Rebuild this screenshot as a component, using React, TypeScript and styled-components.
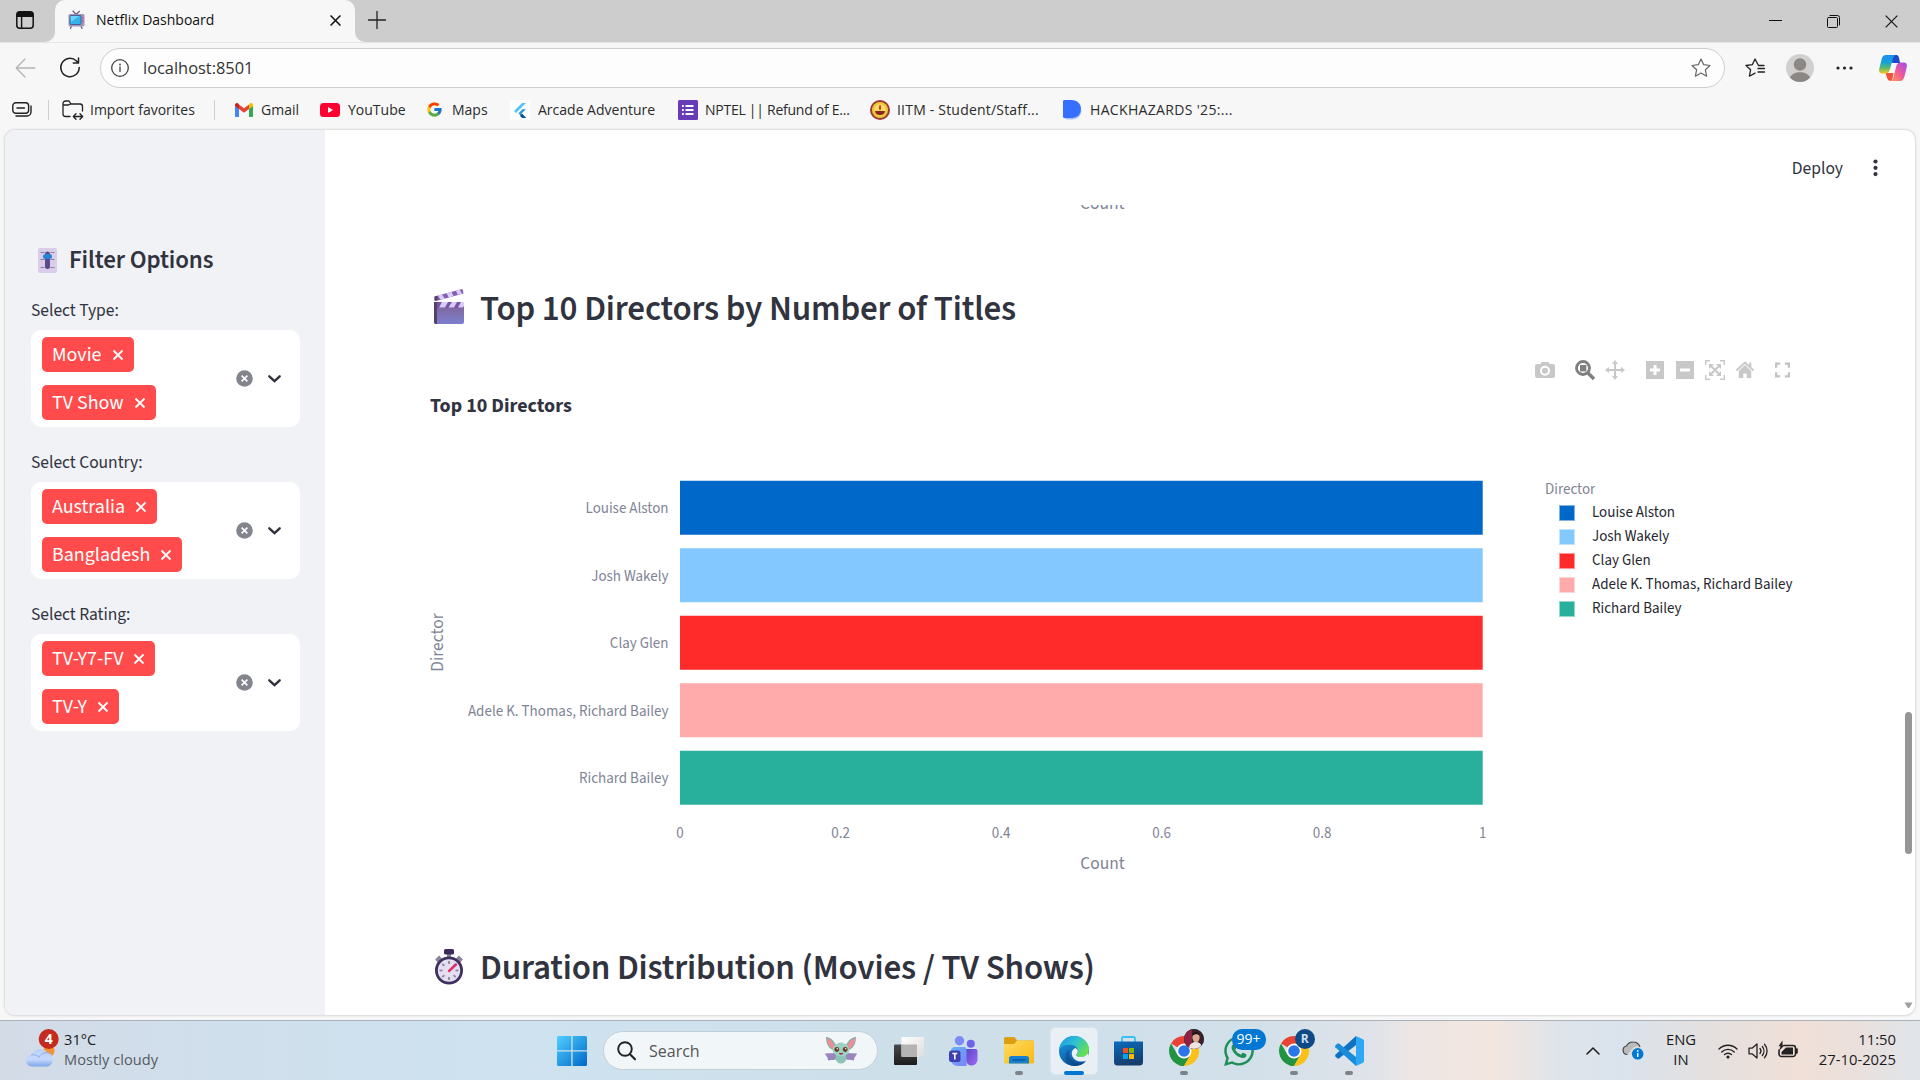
import React from 'react';
import styled, { createGlobalStyle } from 'styled-components';
import { FcGoogle } from 'react-icons/fc';
import { FaWhatsapp } from 'react-icons/fa';

const SOURCE = '"Source Sans 3", "Source Sans Pro", "Noto Sans CJK JP", sans-serif';
const SEGOE = '"Segoe UI", "Open Sans", "Noto Sans", sans-serif';

const GlobalStyle = createGlobalStyle`
  * { box-sizing: border-box; }
  body { margin: 0; background: #f7f7f7; font-family: ${SEGOE}; overflow: hidden; }
  svg { display: block; flex: none; overflow: visible; }
`;

const Screen = styled.div`
  width: 1920px;
  height: 1080px;
  display: flex;
  flex-direction: column;
  background: #f7f7f7;
  overflow: hidden;
`;

/* ---------- Browser tab strip ---------- */
const TabStrip = styled.div`
  height: 42px;
  flex: none;
  display: flex;
  background: linear-gradient(#cdcdcd 50%, #f7f7f7 50%);
`;
const StripStart = styled.div`
  width: 55px;
  padding: 11px 0 0 16px;
  background: #cdcdcd;
  border-bottom-right-radius: 10px;
`;
const Tab = styled.div`
  width: 300px;
  display: flex;
  align-items: center;
  padding: 0 14px 2px 13px;
  background: #f7f7f7;
  border-radius: 10px 10px 0 0;
`;
const TabTitle = styled.span`
  flex: 1;
  margin-left: 11px;
  font-size: 14px;
  line-height: 20px;
  color: #111;
`;
const StripRest = styled.div`
  flex: 1;
  display: flex;
  justify-content: space-between;
  align-items: flex-start;
  padding: 11px 22px 0 13px;
  background: #cdcdcd;
  border-bottom-left-radius: 10px;
`;
const WindowButtons = styled.div`
  display: flex;
  gap: 45px;
  padding-top: 4px;
`;

/* ---------- Address row ---------- */
const AddressRow = styled.div`
  height: 51px;
  flex: none;
  display: flex;
  align-items: center;
  border-top: 1px solid #e6e6e6;
  padding: 0 13px 1px 15px;
`;
const BackSlot = styled.div`width: 45px;`;
const ReloadSlot = styled.div`width: 40px;`;
const AddressField = styled.div`
  width: 1625px;
  height: 40px;
  display: flex;
  align-items: center;
  padding: 0 13px 0 10px;
  background: #fdfdfd;
  border: 1px solid #cfcfcf;
  border-radius: 20px;
`;
const Url = styled.span`
  flex: 1;
  margin-left: 14px;
  padding-bottom: 1px;
  font-size: 16.4px;
  color: #333;
`;
const BrowserTools = styled.div`
  flex: 1;
  display: flex;
  align-items: center;
  padding-left: 20px;
`;
const ToolSlot = styled.div<{ $w: number }>`width: ${p => p.$w}px;`;

/* ---------- Favourites row ---------- */
const FavoritesRow = styled.div`
  height: 36px;
  flex: none;
  display: flex;
  align-items: center;
  padding-bottom: 3px;
  font-size: 14px;
  color: #2b2b2b;
`;
const Favorite = styled.div<{ $w: number; $gap: number; $spacing?: number }>`
  width: ${p => p.$w}px;
  display: flex;
  align-items: center;
  gap: ${p => p.$gap}px;
  letter-spacing: ${p => p.$spacing ?? 0}px;
  white-space: nowrap;
`;
const FavoriteLabel = styled.span`padding-bottom: 1px;`;
const Divider = styled.div<{ $after: number }>`
  width: 1px;
  height: 20px;
  margin-right: ${p => p.$after}px;
  background: #cfcfcf;
`;
const CollectionsSlot = styled.div`width: 48px; padding-left: 12px;`;

/* ---------- Page frame ---------- */
const PageFrame = styled.div`
  height: 885px;
  flex: none;
  display: flex;
  margin: 1px 5px 0;
  border-radius: 10px;
  background: #fff;
  box-shadow: 0 0 2px 1px rgba(0, 0, 0, 0.12);
  overflow: hidden;
`;
const Sidebar = styled.aside`
  width: 320px;
  flex: none;
  padding: 112px 25px 0 26px;
  background: #f0f2f6;
  color: #31333f;
  font-family: ${SOURCE};
`;
const SidebarTitle = styled.h2`
  display: flex;
  align-items: center;
  gap: 12px;
  height: 36px;
  margin: 0 0 18px;
  padding-left: 7px;
  font-size: 25px;
  font-weight: 600;
  letter-spacing: -0.13px;
`;
const FilterGroup = styled.div`
  display: flex;
  flex-direction: column;
  height: 152px;
`;
const FilterLabel = styled.label`
  height: 34px;
  line-height: 29px;
  font-size: 17.5px;
  letter-spacing: -0.03px;
`;
const MultiSelect = styled.div`
  width: 269px;
  height: 97px;
  display: flex;
  align-items: center;
  padding: 0 19px 0 11px;
  background: #fff;
  border-radius: 10px;
`;
const TagList = styled.div`
  flex: 1;
  display: flex;
  flex-direction: column;
  align-items: flex-start;
  gap: 13px;
`;
const Tag = styled.span`
  height: 35px;
  display: flex;
  align-items: center;
  gap: 11px;
  padding: 1px 11px 0 10px;
  border-radius: 5px;
  background: #ff4b4b;
  color: #fff;
  font-size: 20px;
  line-height: 35px;
`;
const SelectActions = styled.div`
  display: flex;
  align-items: center;
  gap: 15px;
`;

const Main = styled.main`
  flex: 1;
  display: flex;
  flex-direction: column;
  font-family: ${SOURCE};
  color: #31333f;
`;
const Toolbar = styled.header`
  height: 75px;
  flex: none;
  display: flex;
  justify-content: flex-end;
  align-items: center;
  gap: 30px;
  padding: 1px 37px 0 0;
  font-size: 17.5px;
`;
const ScrollArea = styled.div`
  flex: 1;
  display: flex;
  overflow: hidden;
`;
const Content = styled.div`
  flex: 1;
  padding-left: 105px;
`;
const ClippedAxisTitle = styled.div`
  height: 70px;
  padding-left: 650px;
  overflow: hidden;
  font-size: 17.5px;
  line-height: 20px;
  color: #808495;

  span { display: block; margin-top: -11px; }
`;
const SectionTitle = styled.h3`
  display: flex;
  align-items: center;
  gap: 16px;
  height: 66px;
  margin: 0;
  padding-left: 4px;
  font-size: 35px;
  font-weight: 600;
  letter-spacing: -0.19px;
  line-height: 42px;

  span { padding-top: 2px; }
`;
const Chart = styled.figure`
  height: 593px;
  margin: 0;
  display: flex;
  flex-direction: column;
`;
const ModeBar = styled.div`
  display: flex;
  align-items: center;
  height: 58px;
  padding-left: 1105px;
`;
const ModeButton = styled.div<{ $gap: number }>`
  width: 20px;
  margin-right: ${p => p.$gap}px;
`;
const ChartTitle = styled.figcaption`
  height: 61px;
  line-height: 14px;
  font-size: 20px;
  font-weight: 700;
`;
const ChartBody = styled.div`
  display: flex;
`;
const Legend = styled.div`
  padding-top: 19px;
  font-size: 15px;
  line-height: 24px;
  color: #262730;
`;
const LegendTitle = styled.div`
  height: 22px;
  line-height: 22px;
  color: #808495;
`;
const LegendItem = styled.div`
  display: flex;
  align-items: center;
  height: 24px;
  padding-left: 14px;
  gap: 17px;
  white-space: nowrap;
`;
const Swatch = styled.i<{ $color: string }>`
  width: 16px;
  height: 16px;
  margin-top: -1px;
  background: ${p => p.$color};
  border: 0.5px solid rgba(255, 255, 255, 0.5);
`;
const ScrollTrack = styled.div`
  width: 13px;
  display: flex;
  flex-direction: column;
  align-items: center;
  justify-content: space-between;
  padding: 507px 1px 6px 0;
`;
const ScrollThumb = styled.div`
  width: 7px;
  height: 142px;
  border-radius: 4px;
  background: #969696;
`;

/* ---------- Taskbar ---------- */
const Taskbar = styled.footer`
  height: 60px;
  margin-top: auto;
  flex: none;
  display: flex;
  align-items: center;
  border-top: 1px solid #a9b2ba;
  background: linear-gradient(90deg, #d3dbe7 0, #d0dfec 220px, #cee2f0 500px, #cddfe9 900px,
    #d2e0ea 1250px, #e0e3e9 1375px, #ece6e5 1410px, #f3e6df 1490px, #dfe4ea 1560px, #dae3ed 1620px,
    #e3e0e0 1700px, #f0e0d8 1800px, #ebe0db 1850px, #dfe5ea 1920px);
  color: #1b1b1b;
`;
const Weather = styled.div`
  width: 557px;
  display: flex;
  align-items: center;
  padding-left: 25px;
  gap: 5px;
`;
const WeatherText = styled.div`
  font-size: 14.6px;
  line-height: 20px;
  padding-bottom: 4px;
  letter-spacing: 0.05px;
`;
const Muted = styled.div`color: #555b62;`;
const SearchPill = styled.div`
  width: 275px;
  height: 39px;
  margin: 0 3px 0 16px;
  display: flex;
  align-items: center;
  padding: 0 20px 0 13px;
  border: 1px solid #c3d0d8;
  border-radius: 20px;
  background: #f1f6f9;
`;
const SearchText = styled.span`
  flex: 1;
  margin-left: 13px;
  font-size: 16px;
  color: #555;
`;
const AppSlot = styled.div`
  position: relative;
  width: 55.1px;
  height: 48px;
  display: flex;
  align-items: center;
  justify-content: center;
`;
const ActiveTile = styled.div`
  width: 48px;
  height: 48px;
  display: flex;
  align-items: center;
  justify-content: center;
  border-radius: 5px;
  border: 1px solid #dbe5ec;
  background: #e8f0f6;
`;
const Indicator = styled.i<{ $active?: boolean }>`
  position: absolute;
  bottom: 0;
  left: 50%;
  width: ${p => (p.$active ? 20 : 8)}px;
  height: 4px;
  margin-left: ${p => (p.$active ? -10 : -4)}px;
  border-radius: 2px;
  background: ${p => (p.$active ? '#0078d4' : '#7c8388')};
`;
const CountBadge = styled.span`
  position: absolute;
  top: 2px;
  left: 20px;
  width: 34px;
  height: 21px;
  border-radius: 10px;
  background: #0078d4;
  color: #fff;
  font-size: 14px;
  line-height: 20px;
  text-align: center;
`;
const ProfileBadge = styled.span`
  position: absolute;
  top: 2px;
  left: 28px;
  width: 20px;
  height: 20px;
  border-radius: 50%;
  overflow: hidden;
  background: #0e4a86;
  color: #cfe0f2;
  font-size: 12px;
  font-weight: 700;
  line-height: 20px;
  text-align: center;
`;
const Tray = styled.div`
  flex: 1;
  display: flex;
  align-items: center;
  justify-content: flex-end;
  padding-right: 24px;
`;
const TraySlot = styled.div<{ $after: number }>`margin-right: ${p => p.$after}px;`;
const TrayText = styled.div<{ $align: string; $w: number }>`
  width: ${p => p.$w}px;
  padding-bottom: 3px;
  text-align: ${p => p.$align};
  font-size: 14.8px;
  line-height: 20px;
  white-space: nowrap;
`;

/* ---------- Icons ---------- */
const line = (width = 1.4, color = '#222') => ({
  fill: 'none', stroke: color, strokeWidth: width, strokeLinecap: 'round' as const, strokeLinejoin: 'round' as const,
});

const TabActionsIcon = () => (
  <svg width="18" height="18" viewBox="0 0 18 18">
    <rect x="0.8" y="0.8" width="16.4" height="16.4" rx="3" {...line(1.5, '#111')} />
    <path d="M.8 6V4a3 3 0 0 1 3-3.2h10.4a3 3 0 0 1 3 3.2v2z" fill="#111" />
    <path d="M5.6 5v12" {...line(1.4, '#111')} />
  </svg>
);
const TvIcon = () => (
  <svg width="17" height="18" viewBox="0 0 17 18">
    <path d="m5 0 3 3.5L11.500.3M3.500 15 2.500 17.500M13 15l1 2.500" {...line(1.2, '#6b5a78')} />
    <rect x="0.500" y="3" width="16" height="12.500" rx="1.500" fill="#a695b5" />
    <rect x="2" y="4.500" width="11" height="9" rx="1" fill="#32b3ee" stroke="#37538a" strokeWidth=".8" />
    <path d="M2.500 5h9L3 11z" fill="#6bd2fa" />
    <circle cx="14.900" cy="7" r=".8" fill="#e0386a" /><circle cx="14.900" cy="10" r=".7" fill="#6b5a78" />
  </svg>
);
const CrossIcon = ({ size = 10, w = 1.4, color = '#111' }: { size?: number; w?: number; color?: string }) => (
  <svg width={size} height={size} viewBox="0 0 10 10"><path d="m.5.5 9 9m0-9-9 9" {...line(w, color)} strokeLinecap="butt" /></svg>
);
const PlusIcon = () => <svg width="18" height="18" viewBox="0 0 18 18"><path d="M9 .5v17M.5 9h17" {...line(1.3)} /></svg>;
const MinimizeIcon = () => <svg width="13" height="13" viewBox="0 0 13 13"><path d="M0 5.500h13" stroke="#111" /></svg>;
const RestoreIcon = () => (
  <svg width="13" height="13" viewBox="0 0 13 13">
    <rect x=".5" y="2.500" width="10" height="10" rx="1" {...line(1, '#111')} />
    <path d="M3 .5h7.500a2 2 0 0 1 2 2V10" {...line(1, '#111')} />
  </svg>
);
const BackIcon = () => <svg width="21" height="20" viewBox="0 0 21 20"><path d="M20 10H1.500M10 1 1.200 10l8.800 9" {...line(1.3, '#b4b4b4')} /></svg>;
const ReloadIcon = () => (
  <svg width="21" height="21" viewBox="0 0 21 21"><path d="M19.200 10.500a9.200 9.200 0 1 1-3-6.800l2 2M18.500 1v5h-5.200" {...line(1.5)} /></svg>
);
const InfoIcon = () => (
  <svg width="18" height="18" viewBox="0 0 18 18">
    <circle cx="9" cy="9" r="8.300" {...line(1.3, '#444')} /><path d="M9 8v4.500" {...line(1.3, '#444')} /><circle cx="9" cy="5.500" r=".9" fill="#444" />
  </svg>
);
const StarIcon = () => (
  <svg width="20" height="20" viewBox="0 0 20 20">
    <path d="m10 1 2.700 5.700 6.300.8-4.600 4.300 1.200 6.400L10 15.100l-5.600 3.100 1.200-6.400L1 7.500l6.300-.8z" {...line(1.2, '#666')} />
  </svg>
);
const FavoritesIcon = () => (
  <svg width="20" height="20" viewBox="0 0 20 20">
    <path d="M19 7.500h-5.500L10 1 7.300 6.700 1 7.500l4.600 4.300-1.200 6.400L10 15.100M13 10.500h6.500M13 14h6.500" {...line(1.3)} />
  </svg>
);
const AvatarIcon = () => (
  <svg width="28" height="28" viewBox="0 0 28 28">
    <circle cx="14" cy="14" r="14" fill="#d2d0ce" /><circle cx="14" cy="10.500" r="6.200" fill="#8a8785" />
    <path d="M4 23.800C5.500 20 9 18.200 14 18.200s8.500 1.800 10 5.600A14 14 0 0 1 4 23.800z" fill="#8a8785" />
  </svg>
);
const DotsIcon = ({ vertical }: { vertical?: boolean }) => vertical ? (
  <svg width="5" height="18" viewBox="0 0 5 18">{[2.5, 8.8, 15.1].map(y => <circle key={y} cx="2.500" cy={y} r="2.100" fill="#31333f" />)}</svg>
) : (
  <svg width="17" height="4" viewBox="0 0 17 4">{[2, 8.5, 15].map(x => <circle key={x} cx={x} cy="2" r="1.600" fill="#222" />)}</svg>
);
const CopilotIcon = () => (
  <svg width="28" height="26" viewBox="0 0 28 26">
    <defs>
      <linearGradient id="cpA" x1="0" y1="0" x2="0" y2="1"><stop offset="0" stopColor="#1f8df0" /><stop offset=".4" stopColor="#17a0d6" /><stop offset=".7" stopColor="#58bb6b" /><stop offset="1" stopColor="#f8c81c" /></linearGradient>
      <linearGradient id="cpB" x1="1" y1="0" x2="0" y2="1"><stop offset="0" stopColor="#9a4df0" /><stop offset=".5" stopColor="#f0599b" /><stop offset="1" stopColor="#ff9a4d" /></linearGradient>
    </defs>
    <path d="M12 0h5.500c1.200 0 2 1 2.300 2.200L21.200 8h-8z" fill="#1b49cf" />
    <path d="M6.500 18h8l-1.500 7.800h-2c-1.600 0-2.300-1-2.700-2.200z" fill="#f0523a" />
    <path d="M7 0h9.500c-1.500.6-2 2-2.500 3.600L10.800 14.500c-.7 2.700-1.800 4-4.500 4H3.200C.6 18.500-.4 16.600.2 14L2.700 4C3.400 1.500 4.800 0 7 0z" fill="url(#cpA)" />
    <path d="M21 26h-9.500c1.800-.7 2.300-2 2.800-3.600L17.200 11.500c.7-2.700 2-4 4.500-4h3.100c2.600 0 3.600 2 3 4.500L25.300 22c-.7 2.500-2.100 4-4.300 4z" fill="url(#cpB)" />
  </svg>
);
const CollectionsIcon = () => (
  <svg width="20" height="15" viewBox="0 0 20 15">
    <rect x=".8" y=".8" width="15.800" height="10.500" rx="3" {...line(1.4)} /><path d="M5 6h7.500M4 14h11a4 4 0 0 0 4-4V4" {...line(1.4)} />
  </svg>
);
const FolderIcon = () => (
  <svg width="22" height="20" viewBox="0 0 22 20">
    <path d="M8 16.500H3.500A2.500 2.500 0 0 1 1 14V3.500A2.500 2.500 0 0 1 3.500 1H7l2 3h9a2.500 2.500 0 0 1 2.500 2.500V11M1 5h5.500L9 3.600M11.500 16.500h9M14 13.800l-2.700 2.700 2.700 2.700m4-5.400 2.700 2.700L18 19.200" {...line(1.3)} />
  </svg>
);
const GmailIcon = () => (
  <svg width="18" height="14" viewBox="0 0 18 14">
    <path d="M0 3v9.700C0 13.400.5 14 1.300 14H4V5z" fill="#4285f4" /><path d="M14 5v9h2.700c.8 0 1.300-.6 1.300-1.300V3z" fill="#34a853" />
    <path d="M14 1.500V6l4-3V2c0-1.800-2-2.600-3.200-1.600z" fill="#fbbc04" /><path d="M4 6V1.500l5 3.800 5-3.800V6L9 9.800z" fill="#ea4335" />
    <path d="M0 2v1l4 3V1.500L3.200.4C2-.6 0 .2 0 2z" fill="#c5221f" />
  </svg>
);
const YoutubeIcon = () => (
  <svg width="20" height="14" viewBox="0 0 20 14"><rect width="20" height="14" rx="3.500" fill="#f03" /><path d="m8 4 5 3-5 3z" fill="#fff" /></svg>
);
const FlutterIcon = () => (
  <svg width="20" height="20" viewBox="0 0 20 20">
    <path d="M0 0h20v20H0z" fill="#fff" /><path d="M4 11 12 3h4l-10 10z" fill="#54c5f8" /><path d="m8.500 13.300 4-4H16l-4.500 4.200L16 18h-3.500z" fill="#2196dc" /><path d="m10 16 2.300-2.300L16 18h-3.800z" fill="#0b4f96" />
  </svg>
);
const FormIcon = () => (
  <svg width="20" height="20" viewBox="0 0 20 20">
    <rect width="20" height="20" rx="1.500" fill="#673ab7" /><path d="M4 6h1.800M4 10h1.800M4 14h1.800M7.500 6h8M7.500 10h8M7.500 14h8" stroke="#fff" strokeWidth="1.900" />
  </svg>
);
const CrestIcon = () => (
  <svg width="20" height="20" viewBox="0 0 20 20">
    <circle cx="10" cy="10" r="10" fill="#9c3a38" /><circle cx="10" cy="10" r="8" fill="#edca36" /><circle cx="10" cy="9.500" r="5.500" fill="#f5de6a" />
    <path d="M5 11h10c-.5 3-2.500 4-5 4s-4.500-1-5-4z" fill="#8c2320" /><path d="M10 4.500c1.500 2 1.500 4.500 0 6-1.500-1.500-1.500-4 0-6z" fill="#d3352b" />
  </svg>
);
const DevfolioIcon = () => (
  <svg width="19" height="20" viewBox="0 0 19 20">
    <path d="M1.500 12v5c0 1.500 1 2.500 2.500 2.500h5c6 0 9-4 9.500-9z" fill="#a9c6ff" /><path d="M1.500 0h7C14.500 0 18 4 18 9s-3.500 9-9.500 9h-7C.6 18 0 17.300 0 16.500v-15C0 .7.6 0 1.500 0z" fill="#3770ff" />
  </svg>
);

const SliderIcon = () => (
  <svg width="19" height="25" viewBox="0 0 19 25">
    <rect width="19" height="25" rx="2" fill="#d9cdea" /><path d="M2.500 4.500h4M12.500 4.500h4M2.500 11.500h4M12.500 11.500h4M2.500 19.500h4M12.500 19.500h4" stroke="#8c8098" strokeWidth="1.100" />
    <rect x="7" y="3.500" width="5" height="17.500" rx="2.500" fill="#5b4a8c" /><rect x="5" y="6" width="9" height="5" rx="2.500" fill="#2784d4" />
  </svg>
);
const ClearIcon = () => (
  <svg width="17" height="17" viewBox="0 0 17 17"><circle cx="8.500" cy="8.500" r="8.300" fill="#83858c" /><path d="m5.600 5.600 5.800 5.800m0-5.800-5.800 5.800" stroke="#fff" strokeWidth="1.700" /></svg>
);
const ChevronIcon = () => <svg width="13" height="8" viewBox="0 0 13 8"><path d="m1.300 1.300 5.200 4.900 5.200-4.900" {...line(2.4, '#31333f')} strokeLinejoin="miter" /></svg>;

const ClapperIcon = () => (
  <svg width="30" height="36" viewBox="0 1 30 36">
    <defs>
      <linearGradient id="clap" x1="0" y1="0" x2="0" y2="1"><stop offset="0" stopColor="#7f6090" /><stop offset="1" stopColor="#7d80cf" /></linearGradient>
      <clipPath id="armClip"><path d="M.5 7.500 27 .3c1-.3 1.800.2 2 1.200l.5 3L3 11.800H.8z" /></clipPath>
      <clipPath id="slateClip"><path d="M0 13h30v6H0z" /></clipPath>
    </defs>
    <g clipPath="url(#armClip)"><path d="M0 0h30v13H0z" fill="#8560b0" /><path d="m3 5 4-1 4 6-4 1.500zM12 3l5-1 3 6-5 1zM21 0l4-1 3 6-4 1z" fill="#d9cdfb" /></g>
    <path d="M0 13h30v20a2 2 0 0 1-2 2H2a2 2 0 0 1-2-2z" fill="url(#clap)" />
    <path d="M0 13h3v22H2a2 2 0 0 1-2-2z" fill="#54406a" />
    <g clipPath="url(#slateClip)"><path d="M3 13h27v6H3z" fill="#7b52a8" /><path d="m8 13h6l-3 5.500H5zM18 13h5l-3 5.500h-5.500zM27 13h3v4l-1 1.500h-5z" fill="#d6cdfb" /></g>
    <path d="M.5 7.500v4.300l3-.8v-4.300z" fill="#54406a" />
  </svg>
);
const StopwatchIcon = () => (
  <svg width="30" height="36" viewBox="0 0 30 36">
    <rect x="13" y="4" width="4" height="5" fill="#8a8496" /><rect x="10" y="0" width="10" height="5.500" rx="1.500" fill="#3d2a5a" />
    <path d="m2.500 12 4-4M27.500 12l-4-4" stroke="#8a8496" strokeWidth="4" />
    <circle cx="15" cy="21.500" r="12.600" fill="#e4dff0" stroke="#40305f" strokeWidth="2.800" />
    <g stroke="#8c86a0" strokeWidth="1.800">
      {[0, 45, 90, 135, 180, 225, 270, 315].map(a => <path key={a} d="M15 12v3" transform={`rotate(${a} 15 21.500)`} />)}
    </g>
    <path d="m15 22 7-6.500" stroke="#e0306a" strokeWidth="2.400" strokeLinecap="round" />
  </svg>
);

const GREY = '#c8c8c8';
const CameraIcon = () => (
  <svg width="20" height="20" viewBox="0 0 20 20">
    <path fillRule="evenodd" d="M6.500 2h7l1 2H18a2 2 0 0 1 2 2v10a2 2 0 0 1-2 2H2a2 2 0 0 1-2-2V6a2 2 0 0 1 2-2h3.500zM10 5.700a5 5 0 1 0 0 10 5 5 0 0 0 0-10z" fill={GREY} /><circle cx="10" cy="10.800" r="3" fill={GREY} />
  </svg>
);
const ZoomIcon = () => (
  <svg width="20" height="20" viewBox="0 0 20 20">
    <circle cx="8" cy="8" r="6.500" fill="none" stroke="#7f7f7f" strokeWidth="2.800" /><path d="m12.500 12.500 6.500 6.500" stroke="#7f7f7f" strokeWidth="3.400" /><rect x="5" y="5" width="6.400" height="6.400" fill="#7f7f7f" />
  </svg>
);
const PanIcon = () => (
  <svg width="20" height="20" viewBox="0 0 20 20"><path d="M10 2v16M2 10h16" stroke={GREY} strokeWidth="2" /><path d="m10 0 3 4H7zM10 20l3-4H7zM0 10l4-3v6zM20 10l-4-3v6z" fill={GREY} /></svg>
);
const ZoomStepIcon = ({ plus }: { plus?: boolean }) => (
  <svg width="20" height="20" viewBox="0 0 20 20"><path d="M1 1h18v18H1z" fill={GREY} /><path d={plus ? 'M10 5v10M5 10h10' : 'M5 10h10'} stroke="#fff" strokeWidth="3" /></svg>
);
const AutoscaleIcon = () => (
  <svg width="20" height="20" viewBox="0 0 20 20">
    <path d="M.7 5V.7H5M15 .7h4.300V5M19.300 15v4.300H15M5 19.300H.7V15" fill="none" stroke={GREY} strokeWidth="1.400" /><path d="m5.500 5.500 9 9m0-9-9 9" stroke={GREY} strokeWidth="2" />
    <path d="M4 4h5L4 9zM16 4v5l-5-5zM16 16h-5l5-5zM4 16v-5l5 5z" fill={GREY} />
  </svg>
);
const HomeIcon = () => (
  <svg width="20" height="20" viewBox="0 0 20 20"><path d="m1.500 10.500 8.500-8 8.500 8M15.300 2.500V8" fill="none" stroke={GREY} strokeWidth="2" /><path d="m3.800 11 6.200-6 6.200 6v7h-4.500v-4.500H8.300V18H3.800z" fill={GREY} /></svg>
);
const FullscreenIcon = () => (
  <svg width="15" height="16" viewBox="0 0 16 16"><path d="M1.200 5.500V1.200h4.300M10.500 1.200h4.300v4.300M14.800 10.500v4.300h-4.300M5.500 14.800H1.200v-4.300" fill="none" stroke="#c2c2c2" strokeWidth="2.400" /></svg>
);

/* Taskbar icons */
const WeatherIcon = () => (
  <svg width="34" height="40" viewBox="0 0 34 40">
    <defs><linearGradient id="cloud" x1="0" y1="0" x2="0" y2="1"><stop offset="0" stopColor="#b9d3f8" /><stop offset=".6" stopColor="#c4d8fa" /><stop offset="1" stopColor="#7fa5ea" /></linearGradient></defs>
    <circle cx="24" cy="20" r="5.500" fill="#f6912b" />
    <path d="M7 35.500a7 6 0 0 1-1-11.700 9.500 9.500 0 0 1 16-2.600A7.500 7.500 0 0 1 23 35.500z" fill="url(#cloud)" />
    <path d="M6 24c3-1 6 0 8 2.500 2-5 8-6 12-3.500" fill="none" stroke="#8eb0ea" />
    <circle cx="23.700" cy="8" r="10" fill="#c42b1c" />
    <text x="23.700" y="13" textAnchor="middle" fontSize="14" fontWeight="700" fill="#fff" fontFamily={SEGOE}>4</text>
  </svg>
);
const WindowsIcon = () => (
  <svg width="30" height="30" viewBox="0 0 30 30">
    <defs><linearGradient id="win" gradientUnits="userSpaceOnUse" x1="0" y1="0" x2="30" y2="30"><stop offset="0" stopColor="#4fd0ff" /><stop offset="1" stopColor="#0067c8" /></linearGradient></defs>
    <path d="M1.500 0h12.800v14.300H0V1.500A1.500 1.500 0 0 1 1.500 0zM15.600 0h12.900A1.500 1.500 0 0 1 30 1.500v12.800H15.600zM0 15.600h14.300V30H1.500A1.500 1.500 0 0 1 0 28.500zM15.600 15.600H30v12.900a1.500 1.500 0 0 1-1.500 1.500H15.600z" fill="url(#win)" />
  </svg>
);
const SearchIcon = () => <svg width="19" height="19" viewBox="0 0 19 19"><circle cx="8" cy="8" r="6.800" {...line(1.9)} /><path d="m13 13.200 5 5" {...line(2.1)} /></svg>;
const CreatureIcon = () => (
  <svg width="32" height="27" viewBox="0 0 32 27">
    <path d="M11 16 0 16.500c1 3 3 3.500 3 7 4-1 7 0 9-2zM21 16l11 .5c-1 3-3 3.500-3 7-4-1-7 0-9-2z" fill="#9a86bd" />
    <path d="M11 8C8 2 4 0 1 0c0 6 2 11 7 13zM21 8c3-6 7-8 10-8 0 6-2 11-7 13z" fill="#7eb5a8" />
    <path d="M10 8.500C7 4 4.500 1.500 1.500.8 2 6 4 9.500 8 12zM22 8.500C25 4 27.500 1.500 30.500.8 30 6 28 9.500 24 12z" fill="#f08b97" />
    <ellipse cx="16" cy="21" rx="5.500" ry="5.500" fill="#8cc5b6" /><path d="M10 8c4-3.500 8-3.500 12 0 2.500 2.500 3 6 1 8.500-3.500 3.500-10.500 3.500-14 0C7 14 7.500 10.500 10 8z" fill="#9ad3c3" />
    <circle cx="11.800" cy="12.500" r="2.400" fill="#6b3a22" /><circle cx="20.200" cy="12.500" r="2.400" fill="#6b3a22" /><circle cx="12.300" cy="11.800" r=".7" fill="#fff" /><circle cx="20.700" cy="11.800" r=".7" fill="#fff" />
    <path d="M13.800 16h4.400c-.5 2.200-3.900 2.200-4.400 0z" fill="#a12c38" />
  </svg>
);
const TaskViewIcon = () => (
  <svg width="30" height="28" viewBox="0 0 30 28">
    <defs>
      <linearGradient id="tvA" x1="0" y1="0" x2="0" y2="1"><stop offset="0" stopColor="#4a4a4a" /><stop offset="1" stopColor="#1c1c1c" /></linearGradient>
      <linearGradient id="tvB" x1="0" y1="0" x2="1" y2="1"><stop offset="0" stopColor="#fff" /><stop offset="1" stopColor="#dcdcdc" /></linearGradient>
    </defs>
    <rect x="0" y="7.500" width="23" height="20.500" rx="1" fill="url(#tvA)" /><rect x="7.500" y="0" width="22.500" height="20" rx="1" fill="url(#tvB)" /><path d="M7.500 7.500H23V20H8.500a1 1 0 0 1-1-1z" fill="#b4b4b4" />
  </svg>
);
const TeamsIcon = () => (
  <svg width="29" height="30" viewBox="0 0 29 30">
    <defs>
      <linearGradient id="tmA" x1="0" y1="0" x2="1" y2="1"><stop offset="0" stopColor="#63b4fb" /><stop offset="1" stopColor="#7b83f5" /></linearGradient>
      <linearGradient id="tmB" x1="0" y1="0" x2="1" y2="1"><stop offset="0" stopColor="#5a46c8" /><stop offset="1" stopColor="#9d6bf5" /></linearGradient>
    </defs>
    <circle cx="10.500" cy="4.700" r="4.700" fill="#7d8bf8" /><circle cx="21.800" cy="7.800" r="4" fill="#6c63e8" />
    <path d="M17 13h9.500a2 2 0 0 1 2 2v8c0 4-2.500 6.500-6 6.500S17 27 17 23z" fill="url(#tmB)" />
    <path d="M6 11h9a2.500 2.500 0 0 1 2.500 2.500V30H9c-4.500 0-7-3-7-7v-8a4 4 0 0 1 4-4z" fill="url(#tmA)" />
    <rect x="0" y="14.500" width="11.500" height="11.500" rx="2.500" fill="#3f3fb0" />
    <path d="M3.300 17.500h5M5.800 17.500v6" stroke="#fff" strokeWidth="1.600" />
  </svg>
);
const ExplorerIcon = () => (
  <svg width="30" height="27" viewBox="0 0 30 27">
    <defs><linearGradient id="ex" x1="0" y1="0" x2="1" y2="1"><stop offset="0" stopColor="#ffdc64" /><stop offset="1" stopColor="#f9b80e" /></linearGradient></defs>
    <path d="M0 1.500A1.500 1.500 0 0 1 1.500 0h8.800l3 3.500H28.500A1.500 1.500 0 0 1 30 5v5H0z" fill="#dc9e0c" /><path d="M0 7h10l3-3.500h17V25a1.500 1.500 0 0 1-1.500 1.500h-27A1.500 1.500 0 0 1 0 25z" fill="url(#ex)" />
    <path d="M5 26.500v-5A2.500 2.500 0 0 1 7.500 19h15a2.500 2.500 0 0 1 2.500 2.500v5z" fill="#1380d4" /><path d="M8.500 23h13" stroke="#0b5491" strokeWidth="1.400" />
  </svg>
);
const EdgeIcon = () => (
  <svg width="30" height="30" viewBox="0 0 24 24">
    <defs>
      <linearGradient id="edA" x1="0" y1="0" x2="1" y2=".6"><stop offset="0" stopColor="#1d8fe0" /><stop offset=".5" stopColor="#2cc0d8" /><stop offset="1" stopColor="#66e04c" /></linearGradient>
      <linearGradient id="edB" x1="0" y1="0" x2=".4" y2="1"><stop offset="0" stopColor="#1b9de2" /><stop offset="1" stopColor="#0c59a4" /></linearGradient>
      <linearGradient id="edC" x1="0" y1="0" x2="1" y2="1"><stop offset="0" stopColor="#1160ae" /><stop offset="1" stopColor="#0b3f7c" /></linearGradient>
    </defs>
    <circle cx="12" cy="12" r="12" fill="url(#edB)" />
    <path d="M0 11.200C1.200 4 6.400 0 12 0c7.500 0 12 5.500 12 10.500 0 3.800-3 6.300-6.300 6.300-3 0-4.300-1.200-4-2 .6-.8 1.300-1.600 1.300-3C15 8.600 12 7 8.700 7 4.600 7 1.500 8.500 0 11.200z" fill="url(#edA)" />
    <path d="M8.200 10.500c-1.700 6 2.800 11 8.300 11 1.800 0 3.800-.8 5.500-2-2.200 3-5.800 4.500-9.500 4.500-5 0-8-4.500-7.300-8.500.3-2 1.500-4 3-5z" fill="url(#edC)" />
    <path d="M13.700 14.800c-.3.800 1 2 4 2 2.500 0 4.800-1.400 5.800-3.600L23.800 17l-1.500 2.300c-1.700 1-3.700 1.300-5.300 1.100-4.300-.4-7.800-4-6.600-8 .5-1.600 1.800-2.600 2.700-2.900 1.200.8 2 1.700 1.900 2.800-.1 1-.7 1.700-1.300 2.500z" fill="#e8f0f6" />
  </svg>
);
const StoreIcon = () => (
  <svg width="29" height="30" viewBox="0 0 29 30">
    <defs><linearGradient id="st" x1="0" y1="0" x2=".3" y2="1"><stop offset="0" stopColor="#0b6bc0" /><stop offset="1" stopColor="#153e6d" /></linearGradient></defs>
    <path d="M8 6V2.500A1.500 1.500 0 0 1 9.500 1h10A1.500 1.500 0 0 1 21 2.500V6" fill="none" stroke="#38c0f0" strokeWidth="1.800" />
    <path d="M0 5.500h29V26a3.500 3.500 0 0 1-3.500 3.500h-22A3.500 3.500 0 0 1 0 26z" fill="url(#st)" />
    <path d="M9 12h5v5H9z" fill="#f25022" /><path d="M15 12h5v5h-5z" fill="#7fba00" /><path d="M9 18h5v5H9z" fill="#00a4ef" /><path d="M15 18h5v5h-5z" fill="#ffb900" />
  </svg>
);
const ChromeIcon = () => (
  <svg width="30" height="30" viewBox="0 0 48 48">
    <path d="M24 24 3.200 12A24 24 0 0 1 44.800 12z" fill="#ea4335" />
    <path d="M3.200 12 13.600 30 24 36l-6 11.200A24 24 0 0 1 3.200 12z" fill="#229342" /><path d="m13.600 30 10.400 6 10.400-6L24 48a24 24 0 0 1-8-1.400z" fill="#229342" />
    <path d="M34.400 30 24 48a24 24 0 0 0 20.800-36H24z" fill="#fbc116" />
    <circle cx="24" cy="24" r="12" fill="#fff" /><circle cx="24" cy="24" r="9.300" fill="#2a75e8" />
  </svg>
);
const PortraitIcon = () => (
  <svg width="20" height="20" viewBox="0 0 20 20">
    <path d="M0 0h20v20H0z" fill="#3a2128" /><path d="M0 0h8v20H0z" fill="#8b2343" /><path d="M5 20c0-5 3-7 7-7s6 3 6 7z" fill="#eee4e2" /><ellipse cx="12" cy="8.500" rx="3.600" ry="4.800" fill="#dba994" /><path d="M8 7c0-5 8-5.500 8 0-2-2.500-5-2.500-8 0z" fill="#1d1418" />
  </svg>
);
const VsCodeIcon = () => (
  <svg width="30" height="30" viewBox="0 0 30 30">
    <path d="M22 0 1.300 18.800l-.2 1.500L3.500 22.500 5 22.400 22 9z" fill="#0d72c4" /><path d="M22 30 1.300 11.200l-.2-1.500L3.500 7.500 5 7.600 22 21z" fill="#1a8cdc" /><path d="M22 0 29 3.300c.6.300 1 .9 1 1.600v20.200c0 .7-.4 1.300-1 1.600L22 30z" fill="#2ea7f5" />
  </svg>
);
const UpIcon = () => <svg width="14" height="8" viewBox="0 0 14 8"><path d="m1 7 6-6 6 6" {...line(1.6)} /></svg>;
const OneDriveIcon = () => (
  <svg width="21" height="19" viewBox="0 0 21 19">
    <path d="M4.500 13.500A4.300 4.300 0 0 1 3.500 5 7 7 0 0 1 10 1c4 0 6 2 7 5" fill="#bababa" stroke="#444" strokeWidth="1.200" /><path d="M4.500 13.500h6L17 6c-4-2-7-.5-12.500 7.500z" fill="#dcdcdc" />
    <circle cx="14.700" cy="12.800" r="5.800" fill="#0078d4" /><path d="M14.700 12v4" stroke="#fff" strokeWidth="1.500" /><circle cx="14.700" cy="9.900" r=".9" fill="#fff" />
  </svg>
);
const WifiIcon = () => (
  <svg width="20" height="16" viewBox="0 0 20 16"><path d="M1 6a12.700 12.700 0 0 1 18 0M3.800 8.900a8.800 8.800 0 0 1 12.400 0M6.600 11.600a4.800 4.800 0 0 1 6.800 0" {...line(1.4)} /><circle cx="10" cy="14" r="1.600" fill="#222" /></svg>
);
const VolumeIcon = () => (
  <svg width="20" height="18" viewBox="0 0 20 18"><path d="M1 6.200h3L9 2v14l-5-4.200H1zM12 6.500a4 4 0 0 1 0 5M14.300 4.500a7 7 0 0 1 0 9M16.500 2.300a10 10 0 0 1 0 13.400" {...line(1.3)} /></svg>
);
const BatteryIcon = () => (
  <svg width="21" height="19" viewBox="0 0 21 19">
    <path d="M6 4.500h9a2.500 2.500 0 0 1 2.500 2.500v6a2.500 2.500 0 0 1-2.500 2.500H3.500A2.500 2.500 0 0 1 1 13V9M19 8v4" {...line(1.6)} /><path d="M8 6.500h7V13.500H3.500V11z" fill="#222" /><path d="M4.500-.5.5 5.200h2L1.200 9.800l5.300-5.600H4.500z" fill="#222" />
  </svg>
);

/* ---------- Data ---------- */
const FILTERS = [
  { label: 'Select Type:', tags: ['Movie', 'TV Show'] },
  { label: 'Select Country:', tags: ['Australia', 'Bangladesh'] },
  { label: 'Select Rating:', tags: ['TV-Y7-FV', 'TV-Y'] },
];
const DIRECTORS = [
  { name: 'Louise Alston', color: '#0068c9', count: 1 },
  { name: 'Josh Wakely', color: '#83c9ff', count: 1 },
  { name: 'Clay Glen', color: '#ff2b2b', count: 1 },
  { name: 'Adele K. Thomas, Richard Bailey', color: '#ffabab', count: 1 },
  { name: 'Richard Bailey', color: '#29b09d', count: 1 },
];
const FAVORITES = [
  { label: 'Gmail', icon: <GmailIcon />, width: 85, gap: 8 },
  { label: 'YouTube', icon: <YoutubeIcon />, width: 106, gap: 8 },
  { label: 'Maps', icon: <FcGoogle size={17} />, width: 84, gap: 9 },
  { label: 'Arcade Adventure', icon: <FlutterIcon />, width: 168, gap: 8 },
  { label: 'NPTEL || Refund of E...', icon: <FormIcon />, width: 192, gap: 7, spacing: -0.26 },
  { label: 'IITM - Student/Staff...', icon: <CrestIcon />, width: 193, gap: 7, spacing: 0.2 },
  { label: "HACKHAZARDS '25:...", icon: <DevfolioIcon />, width: 200, gap: 8, spacing: 0.33 },
];

/* Plot geometry: x = 250 is zero, one unit is 802.7px wide; rows are 67.5px apart. */
const PlotSvg = () => (
  <svg width="1115" height="440" viewBox="0 0 1115 440" fontFamily={SOURCE} fill="#808495">
    {DIRECTORS.map((d, i) => (
      <g key={d.name}>
        <rect x="250" y={20.75 + i * 67.5} width={802.7 * d.count} height="54" fill={d.color} />
        <text x="238.500" y={53.2 + i * 67.5} fontSize="15" textAnchor="end">{d.name}</text>
      </g>
    ))}
    {[0, 0.2, 0.4, 0.6, 0.8, 1].map(t => (
      <text key={t} x={250 + t * 802.7} y="378" fontSize="15" textAnchor="middle">{t}</text>
    ))}
    <text x="672.500" y="409" fontSize="17.500" textAnchor="middle">Count</text>
    <text transform="translate(13 182.500) rotate(-90)" fontSize="17.500" textAnchor="middle">Director</text>
  </svg>
);

export default function App() {
  return (
    <Screen>
      <GlobalStyle />
      <TabStrip>
        <StripStart><TabActionsIcon /></StripStart>
        <Tab><TvIcon /><TabTitle>Netflix Dashboard</TabTitle><CrossIcon size={11} /></Tab>
        <StripRest>
          <PlusIcon />
          <WindowButtons><MinimizeIcon /><RestoreIcon /><CrossIcon size={13} w={0.9} /></WindowButtons>
        </StripRest>
      </TabStrip>
      <AddressRow>
        <BackSlot><BackIcon /></BackSlot>
        <ReloadSlot><ReloadIcon /></ReloadSlot>
        <AddressField><InfoIcon /><Url>localhost:8501</Url><StarIcon /></AddressField>
        <BrowserTools>
          <ToolSlot $w={41}><FavoritesIcon /></ToolSlot>
          <ToolSlot $w={50}><AvatarIcon /></ToolSlot>
          <ToolSlot $w={43}><DotsIcon /></ToolSlot>
          <CopilotIcon />
        </BrowserTools>
      </AddressRow>
      <FavoritesRow>
        <CollectionsSlot><CollectionsIcon /></CollectionsSlot>
        <Divider $after={13} />
        <Favorite $w={152} $gap={6}><FolderIcon /><FavoriteLabel>Import favorites</FavoriteLabel></Favorite>
        <Divider $after={20} />
        {FAVORITES.map(f => (
          <Favorite key={f.label} $w={f.width} $gap={f.gap} $spacing={f.spacing}>
            {f.icon}<FavoriteLabel>{f.label}</FavoriteLabel>
          </Favorite>
        ))}
      </FavoritesRow>

      <PageFrame>
        <Sidebar>
          <SidebarTitle><SliderIcon />Filter Options</SidebarTitle>
          {FILTERS.map(f => (
            <FilterGroup key={f.label}>
              <FilterLabel>{f.label}</FilterLabel>
              <MultiSelect>
                <TagList>{f.tags.map(t => <Tag key={t}>{t}<CrossIcon color="#fff" w={1.8} /></Tag>)}</TagList>
                <SelectActions><ClearIcon /><ChevronIcon /></SelectActions>
              </MultiSelect>
            </FilterGroup>
          ))}
        </Sidebar>
        <Main>
          <Toolbar>Deploy<DotsIcon vertical /></Toolbar>
          <ScrollArea>
            <Content>
              <ClippedAxisTitle><span>Count</span></ClippedAxisTitle>
              <SectionTitle><ClapperIcon /><span>Top 10 Directors by Number of Titles</span></SectionTitle>
              <Chart>
                <ModeBar>
                  <ModeButton $gap={20}><CameraIcon /></ModeButton>
                  <ModeButton $gap={10}><ZoomIcon /></ModeButton>
                  <ModeButton $gap={20}><PanIcon /></ModeButton>
                  <ModeButton $gap={10}><ZoomStepIcon plus /></ModeButton>
                  <ModeButton $gap={10}><ZoomStepIcon /></ModeButton>
                  <ModeButton $gap={10}><AutoscaleIcon /></ModeButton>
                  <ModeButton $gap={20}><HomeIcon /></ModeButton>
                  <FullscreenIcon />
                </ModeBar>
                <ChartTitle>Top 10 Directors</ChartTitle>
                <ChartBody>
                  <PlotSvg />
                  <Legend>
                    <LegendTitle>Director</LegendTitle>
                    {DIRECTORS.map(d => <LegendItem key={d.name}><Swatch $color={d.color} />{d.name}</LegendItem>)}
                  </Legend>
                </ChartBody>
              </Chart>
              <SectionTitle><StopwatchIcon /><span>Duration Distribution (Movies / TV Shows)</span></SectionTitle>
            </Content>
            <ScrollTrack>
              <ScrollThumb />
              <svg width="9" height="7" viewBox="0 0 9 7"><path d="M.5.5h8L5.200 6H3.800z" fill="#a0a0a0" /></svg>
            </ScrollTrack>
          </ScrollArea>
        </Main>
      </PageFrame>

      <Taskbar>
        <Weather><WeatherIcon /><WeatherText>31°C<Muted>Mostly cloudy</Muted></WeatherText></Weather>
        <WindowsIcon />
        <SearchPill><SearchIcon /><SearchText>Search</SearchText><CreatureIcon /></SearchPill>
        <AppSlot><TaskViewIcon /></AppSlot>
        <AppSlot><TeamsIcon /></AppSlot>
        <AppSlot><ExplorerIcon /><Indicator /></AppSlot>
        <AppSlot><ActiveTile><EdgeIcon /></ActiveTile><Indicator $active /></AppSlot>
        <AppSlot><StoreIcon /></AppSlot>
        <AppSlot><ChromeIcon /><ProfileBadge><PortraitIcon /></ProfileBadge><Indicator /></AppSlot>
        <AppSlot><FaWhatsapp size={34} color="#1f8f57" /><CountBadge>99+</CountBadge></AppSlot>
        <AppSlot><ChromeIcon /><ProfileBadge>R</ProfileBadge><Indicator /></AppSlot>
        <AppSlot><VsCodeIcon /><Indicator /></AppSlot>
        <Tray>
          <TraySlot $after={23}><UpIcon /></TraySlot>
          <TraySlot $after={18}><OneDriveIcon /></TraySlot>
          <TraySlot $after={18}><TrayText $align="center" $w={38}>ENG<br />IN</TrayText></TraySlot>
          <TraySlot $after={10}><WifiIcon /></TraySlot>
          <TraySlot $after={10}><VolumeIcon /></TraySlot>
          <TraySlot $after={17}><BatteryIcon /></TraySlot>
          <TrayText $align="right" $w={80}>11:50<br />27-10-2025</TrayText>
        </Tray>
      </Taskbar>
    </Screen>
  );
}
